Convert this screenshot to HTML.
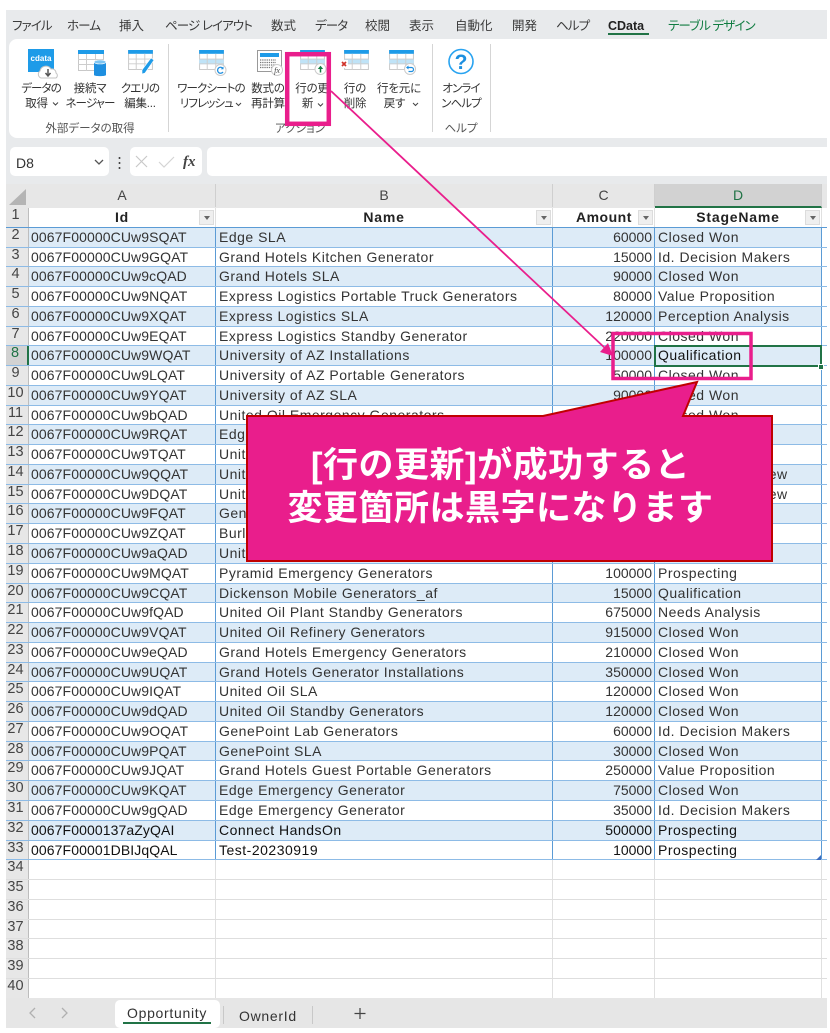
<!DOCTYPE html>
<html lang="ja"><head><meta charset="utf-8"><title>Excel CData</title>
<style>
html,body{margin:0;padding:0;background:#fff}
body{position:relative;width:830px;height:1033px;overflow:hidden;font-family:"Liberation Sans","Noto Sans CJK JP",sans-serif;color:#333}
.abs,.t,.l,.g{position:absolute}
#win{position:absolute;left:6px;top:10px;width:821px;height:1018px;background:#e8eaec}
.t{top:18px;font-size:12.5px;line-height:16px;color:#3a3a3a;white-space:nowrap;font-feature-settings:"palt"}
.t.n{letter-spacing:-.9px}
#rib{position:absolute;left:9px;top:39px;width:818px;height:99px;background:#fff;border-radius:8px 0 0 8px}
.l{font-size:11.5px;line-height:15px;text-align:center;white-space:nowrap;color:#333;transform:translateX(-50%);letter-spacing:-.2px;font-feature-settings:"palt";top:82px}
.l.n{letter-spacing:-.9px}
.g{font-size:11.5px;line-height:14px;top:122px;color:#555;white-space:nowrap;transform:translateX(-50%);font-feature-settings:"palt"}
.sep{position:absolute;top:44px;width:1px;height:88px;background:#d5d5d5}
.box{position:absolute;top:147px;height:29px;background:#fff;border-radius:5px}
#colh{position:absolute;left:6px;top:184px;width:821px;height:24px;background:#e7e7e7}
.ch{position:absolute;top:0;height:23px;line-height:23px;text-align:center;font-size:14px;color:#444;border-right:1px solid #cfcfcf;box-sizing:border-box}
#grid{position:absolute;left:6px;top:208px;width:821px;font-size:14px;background:#fff}
.r{display:flex;height:19.78px;box-sizing:border-box;border-bottom:1px solid #dedede;line-height:18px;white-space:nowrap}
.r>*{box-sizing:border-box;display:block;overflow:hidden;font-style:normal;font-weight:normal;text-decoration:none;flex:none;height:100%}
.r>i{width:23px;background:#e7e7e7;text-align:center;color:#444;line-height:15px;border-right:1px solid #bdbdbd;font-size:14.5px;padding-right:3px}
.r>a{width:187px;padding-left:2px;border-right:1px solid #e0e0e0;letter-spacing:.1px}
.r>b{width:337px;padding-left:3px;border-right:1px solid #e0e0e0;letter-spacing:.5px}
.r>u{width:102px;text-align:right;padding-right:2px;border-right:1px solid #e0e0e0}
.r>s{width:167px;padding-left:3px;border-right:1px solid #e0e0e0;letter-spacing:.5px}
.d{border-bottom:1px solid #8dbbe6}
.d>a,.d>b,.d>u,.d>s{border-right:1.5px solid #5b9bd5}
.e>a,.e>b,.e>u,.e>s{background:#ddebf7}
.k>a,.k>b,.k>u,.k>s{color:#111}
.h>a,.h>b,.h>u,.h>s{position:relative;font-weight:bold;text-align:center;color:#222;padding:0;letter-spacing:.8px}
.h{border-bottom:1.5px solid #5b9bd5}
.f{position:absolute;top:2px;right:1px;width:15px;height:15px;background:#efefef;border:1px solid #dcdcdc;box-sizing:border-box}
.f:after{content:"";position:absolute;left:3.5px;top:5px;border:3.5px solid transparent;border-top:4px solid #666;border-bottom:0}
#bar{position:absolute;left:6px;top:998px;width:821px;height:30px;background:#e6e6e6}
</style></head><body>
<div id="win"></div>
<span class="t n" style="left:12px">ファイル</span>
<span class="t n" style="left:67px">ホーム</span>
<span class="t" style="left:119px">挿入</span>
<span class="t n" style="left:165px">ページ レイアウト</span>
<span class="t" style="left:271px">数式</span>
<span class="t n" style="left:315px">データ</span>
<span class="t" style="left:365px">校閲</span>
<span class="t" style="left:409px">表示</span>
<span class="t" style="left:455px">自動化</span>
<span class="t" style="left:512px">開発</span>
<span class="t n" style="left:556px">ヘルプ</span>
<span class="t" style="left:608px;font-weight:bold;color:#222;letter-spacing:0;font-size:12.5px">CData</span>
<div class="abs" style="left:608px;top:33px;width:41px;height:2px;background:#217346"></div>
<span class="t n" style="left:668px;color:#107c41">テーブル デザイン</span>
<div id="rib"></div>

<svg class="abs" style="left:0;top:0" width="830" height="140">
<defs>
<symbol id="tb" viewBox="0 0 26 21">
<rect x=".5" y=".5" width="25" height="20" fill="#fff" stroke="#c8c8c8"/>
<rect width="26" height="4" fill="#1e9be8"/>
<path d="M0 9.5H26M0 14.5H26M8.5 4V21M17.5 4V21" stroke="#cdcdcd" fill="none"/>
</symbol>
<symbol id="tc" viewBox="0 0 26 21">
<rect x=".5" y=".5" width="25" height="20" fill="#fff" stroke="#c8c8c8"/>
<rect y="10" width="26" height="5" fill="#bfe3f7"/>
<rect width="26" height="4" fill="#1e9be8"/>
<path d="M0 9.5H26M0 14.5H26M8.5 4V21M17.5 4V21" stroke="#cdcdcd" fill="none"/>
</symbol>
</defs>
<!-- data -->
<rect x="28" y="49" width="26" height="23" fill="#1e9be8"/>
<text x="41" y="61" font-size="8" font-weight="bold" text-anchor="middle" font-family="Liberation Sans,sans-serif" fill="#fff">cdata</text>
<path d="M41 78a4 4 0 0 1-1-7 6 6 0 0 1 11-2 4 4 0 0 1 5 4 3 3 0 0 1 0 5z" fill="#fff" stroke="#c4c4c4"/>
<path d="M48 69v6M45.500 73l2.500 3 2.500-3" stroke="#555" stroke-width="1.500" fill="none"/>
<!-- connect -->
<use href="#tb" x="78" y="50" width="26" height="21"/>
<path d="M94 62v13c0 1.500 12 1.500 12 0V62z" fill="#1e8fe0"/><ellipse cx="100" cy="62" rx="6" ry="2" fill="#7cc4f2" stroke="#fff" stroke-width=".6"/>
<!-- query -->
<use href="#tb" x="128" y="50" width="25" height="20"/>
<path d="M151 58l3 2-9 13-3 1 0-4z" fill="#1e9be8" stroke="#fff" stroke-width=".6"/>
<!-- refresh -->
<use href="#tc" x="199" y="50" width="25" height="20"/>
<circle cx="220.500" cy="70" r="5.500" fill="#fff" stroke="#ccc"/><path d="M223 68.500a3 3 0 1 0 0 3.500" fill="none" stroke="#1e8fe0" stroke-width="1.300"/><path d="M223.500 66.500v2.800h-2.800z" fill="#1e8fe0"/>
<!-- calc -->
<rect x="257.500" y="50.500" width="24" height="21" fill="#fff" stroke="#999"/><rect x="260" y="53" width="19" height="4" fill="#1e9be8"/>
<path d="M260 60h16M260 62.500h16M260 65h16M260 67.500h14" stroke="#777" stroke-width="1.200" stroke-dasharray="1.300 .9"/>
<circle cx="277" cy="70" r="5.500" fill="#fff" stroke="#ccc"/><text x="277" y="73" font-size="8" font-style="italic" text-anchor="middle" font-family="Liberation Serif,serif" fill="#444">fx</text>
<!-- update -->
<use href="#tc" x="300" y="50" width="25" height="20"/>
<circle cx="320.500" cy="69" r="5.500" fill="#fff" stroke="#ccc"/><path d="M320.500 72.500v-4" stroke="#107c41" stroke-width="1.500"/><path d="M317.800 69l2.700-3.200 2.700 3.200z" fill="#107c41"/>
<!-- delete -->
<use href="#tc" x="344" y="50" width="25" height="20"/>
<rect x="340" y="60" width="8" height="8" fill="#fff"/><path d="M342 62l4 4M346 62l-4 4" stroke="#d0332a" stroke-width="1.700"/>
<!-- undo -->
<use href="#tc" x="389" y="50" width="25" height="20"/>
<circle cx="410" cy="69" r="5.500" fill="#fff" stroke="#ccc"/><path d="M407 67.500h4.500a2 2 0 0 1 0 4h-3" fill="none" stroke="#1e8fe0" stroke-width="1.200"/><path d="M408.500 65.500v4l-2.500-2z" fill="#1e8fe0"/>
<!-- help -->
<circle cx="461" cy="61.500" r="12" fill="#fff" stroke="#29a3f0" stroke-width="1.600"/>
<text x="461" y="69" font-size="21" font-weight="bold" text-anchor="middle" font-family="Liberation Sans,sans-serif" fill="#1c8fe0">?</text>
<!-- chevrons -->
<path d="M53 102.500l2.500 2.500 2.500-2.500M236 103l2.500 2.500 2.500-2.500M318 103.500l2.500 2.500 2.500-2.500M413 103l2.500 2.500 2.500-2.500" fill="none" stroke="#444"/>
</svg>

<div class="l n" style="left:41px">データの<br><span style="letter-spacing:-.2px">取得&nbsp;&nbsp;&nbsp;</span></div>
<div class="l n" style="left:90px"><span style="letter-spacing:-.2px">接続マ</span><br>ネージャー</div>
<div class="l n" style="left:140px">クエリの<br><span style="letter-spacing:-.2px">編集...</span></div>
<div class="g" style="left:90px">外部データの取得</div>
<div class="sep" style="left:168px"></div>
<div class="l n" style="left:211px">ワークシートの<br>リフレッシュ&nbsp;&nbsp;&nbsp;&nbsp;</div>
<div class="l" style="left:268px">数式の<br>再計算</div>
<div class="l" style="left:312px">行の更<br>新&nbsp;&nbsp;&nbsp;</div>
<div class="l" style="left:355px">行の<br>削除</div>
<div class="l" style="left:399px">行を元に<br>戻す&nbsp;&nbsp;&nbsp;</div>
<div class="g" style="left:300px">アクション</div>
<div class="sep" style="left:432px"></div>
<div class="l n" style="left:461px">オンライ<br>ンヘルプ</div>
<div class="g" style="left:461px">ヘルプ</div>
<div class="sep" style="left:490px"></div>

<div class="box" style="left:10px;width:99px"></div>
<span class="abs" style="left:16px;top:155px;font-size:14px;line-height:16px;color:#333">D8</span>
<svg class="abs" style="left:0;top:147px" width="210" height="29">
<path d="M95 13l4 4 4-4" fill="none" stroke="#555" stroke-width="1.300"/>
<path d="M119.500 10v2M119.500 15v2M119.500 20v2" stroke="#444" stroke-width="1.600"/>
</svg>
<div class="box" style="left:130px;width:72px"></div>
<svg class="abs" style="left:130px;top:147px" width="72" height="29">
<path d="M6 9l11 11M17 9L6 20" stroke="#c9c9c9" stroke-width="1.200" fill="none"/>
<path d="M29 15l5 5 10-10" stroke="#d4d4d4" stroke-width="1.200" fill="none"/>
<text x="53" y="19" font-size="15" font-weight="bold" font-style="italic" font-family="Liberation Serif,serif" fill="#444">fx</text>
</svg>
<div class="box" style="left:207px;width:620px;border-radius:5px 0 0 5px"></div>

<div id="colh">
<svg class="abs" style="left:0;top:0" width="23" height="23"><path d="M20 5V21H3z" fill="#b4b4b4"/></svg>
<div class="ch" style="left:23px;width:187px">A</div>
<div class="ch" style="left:210px;width:337px">B</div>
<div class="ch" style="left:547px;width:102px">C</div>
<div class="ch" style="left:649px;width:167px;background:#d2d2d2;color:#217346;border-bottom:2px solid #217346;height:24px">D</div>
</div>

<div id="grid">
<div class="r h"><i>1</i><a>Id<span class="f"></span></a><b>Name<span class="f"></span></b><u style="text-align:left;padding-left:23px;letter-spacing:.5px">Amount<span class="f"></span></u><s>StageName<span class="f"></span></s></div>
<div class="r d e"><i>2</i><a>0067F00000CUw9SQAT</a><b>Edge SLA</b><u>60000</u><s>Closed Won</s></div>
<div class="r d"><i>3</i><a>0067F00000CUw9GQAT</a><b>Grand Hotels Kitchen Generator</b><u>15000</u><s>Id. Decision Makers</s></div>
<div class="r d e"><i>4</i><a>0067F00000CUw9cQAD</a><b>Grand Hotels SLA</b><u>90000</u><s>Closed Won</s></div>
<div class="r d"><i>5</i><a>0067F00000CUw9NQAT</a><b>Express Logistics Portable Truck Generators</b><u>80000</u><s>Value Proposition</s></div>
<div class="r d e"><i>6</i><a>0067F00000CUw9XQAT</a><b>Express Logistics SLA</b><u>120000</u><s>Perception Analysis</s></div>
<div class="r d"><i>7</i><a>0067F00000CUw9EQAT</a><b>Express Logistics Standby Generator</b><u>220000</u><s>Closed Won</s></div>
<div class="r d e"><i style="background:#d2d2d2;color:#217346;border-right:2px solid #217346">8</i><a>0067F00000CUw9WQAT</a><b>University of AZ Installations</b><u>100000</u><s style="color:#111">Qualification</s></div>
<div class="r d"><i>9</i><a>0067F00000CUw9LQAT</a><b>University of AZ Portable Generators</b><u>50000</u><s>Closed Won</s></div>
<div class="r d e"><i>10</i><a>0067F00000CUw9YQAT</a><b>University of AZ SLA</b><u>90000</u><s>Closed Won</s></div>
<div class="r d"><i>11</i><a>0067F00000CUw9bQAD</a><b>United Oil Emergency Generators</b><u>440000</u><s>Closed Won</s></div>
<div class="r d e"><i>12</i><a>0067F00000CUw9RQAT</a><b>Edge Installation</b><u>50000</u><s>Closed Won</s></div>
<div class="r d"><i>13</i><a>0067F00000CUw9TQAT</a><b>United Oil Installations</b><u>270000</u><s>Closed Won</s></div>
<div class="r d e"><i>14</i><a>0067F00000CUw9QQAT</a><b>United Oil Installations</b><u>270000</u><s>Negotiation/Review</s></div>
<div class="r d"><i>15</i><a>0067F00000CUw9DQAT</a><b>United Oil Office Portable Generators</b><u>125000</u><s>Negotiation/Review</s></div>
<div class="r d e"><i>16</i><a>0067F00000CUw9FQAT</a><b>GenePoint Standby Generator</b><u>85000</u><s>Closed Won</s></div>
<div class="r d"><i>17</i><a>0067F00000CUw9ZQAT</a><b>Burlington Textiles Weaving Plant Generator</b><u>235000</u><s>Closed Won</s></div>
<div class="r d e"><i>18</i><a>0067F00000CUw9aQAD</a><b>United Oil Refinery Generators</b><u>270000</u><s>Closed Won</s></div>
<div class="r d"><i>19</i><a>0067F00000CUw9MQAT</a><b>Pyramid Emergency Generators</b><u>100000</u><s>Prospecting</s></div>
<div class="r d e"><i>20</i><a>0067F00000CUw9CQAT</a><b>Dickenson Mobile Generators_af</b><u>15000</u><s>Qualification</s></div>
<div class="r d"><i>21</i><a>0067F00000CUw9fQAD</a><b>United Oil Plant Standby Generators</b><u>675000</u><s>Needs Analysis</s></div>
<div class="r d e"><i>22</i><a>0067F00000CUw9VQAT</a><b>United Oil Refinery Generators</b><u>915000</u><s>Closed Won</s></div>
<div class="r d"><i>23</i><a>0067F00000CUw9eQAD</a><b>Grand Hotels Emergency Generators</b><u>210000</u><s>Closed Won</s></div>
<div class="r d e"><i>24</i><a>0067F00000CUw9UQAT</a><b>Grand Hotels Generator Installations</b><u>350000</u><s>Closed Won</s></div>
<div class="r d"><i>25</i><a>0067F00000CUw9IQAT</a><b>United Oil SLA</b><u>120000</u><s>Closed Won</s></div>
<div class="r d e"><i>26</i><a>0067F00000CUw9dQAD</a><b>United Oil Standby Generators</b><u>120000</u><s>Closed Won</s></div>
<div class="r d"><i>27</i><a>0067F00000CUw9OQAT</a><b>GenePoint Lab Generators</b><u>60000</u><s>Id. Decision Makers</s></div>
<div class="r d e"><i>28</i><a>0067F00000CUw9PQAT</a><b>GenePoint SLA</b><u>30000</u><s>Closed Won</s></div>
<div class="r d"><i>29</i><a>0067F00000CUw9JQAT</a><b>Grand Hotels Guest Portable Generators</b><u>250000</u><s>Value Proposition</s></div>
<div class="r d e"><i>30</i><a>0067F00000CUw9KQAT</a><b>Edge Emergency Generator</b><u>75000</u><s>Closed Won</s></div>
<div class="r d"><i>31</i><a>0067F00000CUw9gQAD</a><b>Edge Emergency Generator</b><u>35000</u><s>Id. Decision Makers</s></div>
<div class="r d e k"><i>32</i><a>0067F0000137aZyQAI</a><b>Connect HandsOn</b><u>500000</u><s>Prospecting</s></div>
<div class="r d k"><i>33</i><a>0067F00001DBIJqQAL</a><b>Test-20230919</b><u>10000</u><s>Prospecting</s></div>
<div class="r"><i>34</i><a></a><b></b><u></u><s></s></div>
<div class="r"><i>35</i><a></a><b></b><u></u><s></s></div>
<div class="r"><i>36</i><a></a><b></b><u></u><s></s></div>
<div class="r"><i>37</i><a></a><b></b><u></u><s></s></div>
<div class="r"><i>38</i><a></a><b></b><u></u><s></s></div>
<div class="r"><i>39</i><a></a><b></b><u></u><s></s></div>
<div class="r"><i>40</i><a></a><b></b><u></u><s></s></div>
</div>

<div class="abs" style="left:654px;top:345px;width:168px;height:22px;border:2px solid #217346;box-sizing:border-box"></div>
<div class="abs" style="left:818px;top:364px;width:6px;height:6px;background:#217346;border:1px solid #fff;box-sizing:border-box"></div>
<svg class="abs" style="left:816px;top:855px" width="6" height="6"><path d="M5 0V5H0z" fill="#3b6cc0"/></svg>

<div id="bar"></div>
<div class="abs" style="left:115px;top:1000px;width:105px;height:28px;background:#fff;border-radius:5px"></div>
<span class="abs" style="left:127px;top:1005px;font-size:14px;line-height:16px;color:#333;letter-spacing:.7px">Opportunity</span>
<div class="abs" style="left:123px;top:1022px;width:88px;height:2px;background:#217346"></div>
<span class="abs" style="left:239px;top:1008px;font-size:14px;line-height:16px;color:#333;letter-spacing:.7px">OwnerId</span>
<div class="abs" style="left:223px;top:1006px;width:1px;height:18px;background:#c8c8c8"></div>
<div class="abs" style="left:312px;top:1006px;width:1px;height:18px;background:#c8c8c8"></div>
<svg class="abs" style="left:0;top:998px" width="400" height="30">
<path d="M35 10l-5 5 5 5M62 10l5 5-5 5" fill="none" stroke="#b0b0b0" stroke-width="1.300"/>
<path d="M360 10v11M354.500 15.500h11" stroke="#444" stroke-width="1.200"/>
</svg>

<svg class="abs" style="left:0;top:0;pointer-events:none" width="830" height="1033">
<path d="M247 416H543L697 382L683 416H772V561H247Z" fill="#e91e8c" stroke="#c00000" stroke-width="2"/>
<rect x="287.200" y="54.200" width="41.600" height="69.600" fill="none" stroke="#e91e8c" stroke-width="4.500"/>
<rect x="613" y="333.500" width="138" height="45" fill="none" stroke="#e91e8c" stroke-width="3.500"/>
<path d="M331 91L606 349" stroke="#e91e8c" stroke-width="1.800" fill="none"/>
<path d="M613 356L600 352L608 343Z" fill="#e91e8c"/>
</svg>
<div class="abs" style="left:238px;top:444px;width:525px;text-align:center;color:#fff;font-weight:bold;font-size:35px;line-height:43px;letter-spacing:.5px;white-space:nowrap">[行の更新]が成功すると<br>変更箇所は黒字になります</div>
</body></html>
